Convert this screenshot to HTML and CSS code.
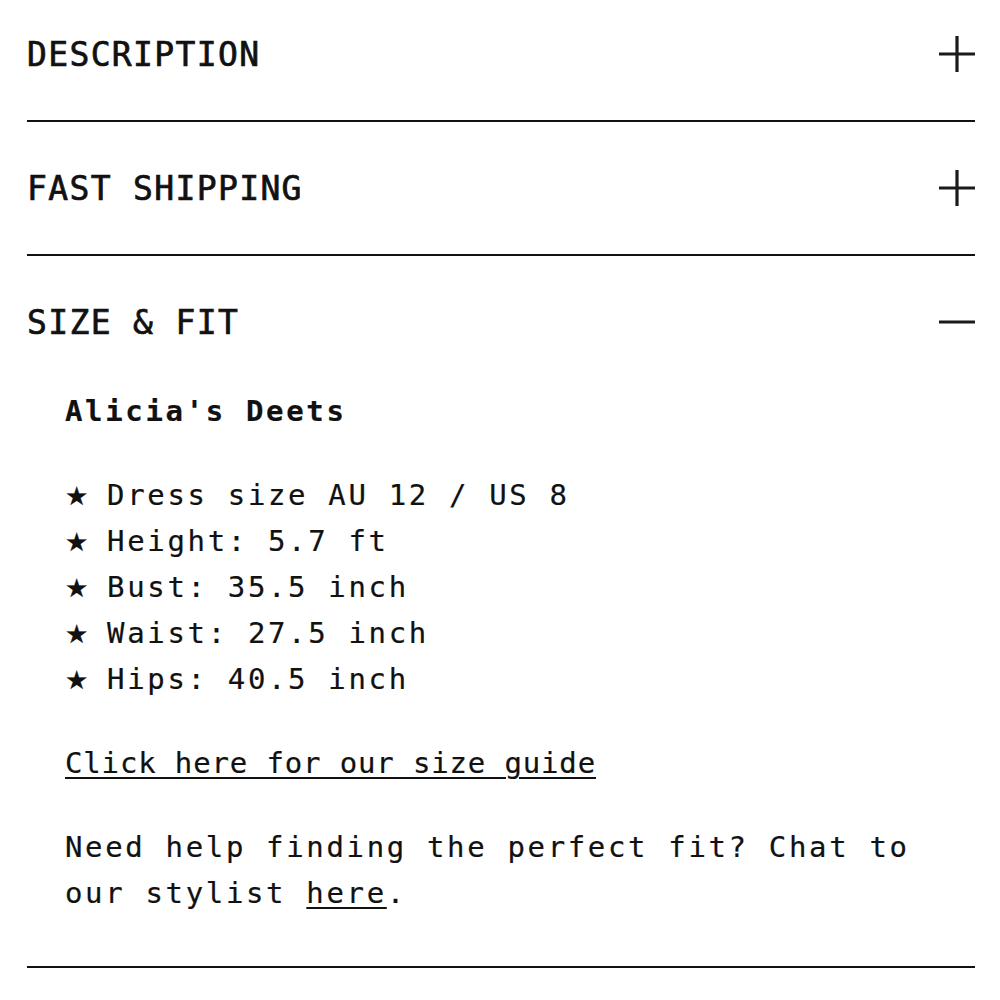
FILE: index.html
```html
<!DOCTYPE html>
<html lang="en">
<head>
<meta charset="utf-8">
<title>Product details</title>
<link rel="stylesheet" href="styles.css">
</head>
<body>
<div class="accordion">
  <section class="item">
    <div class="head">
      <h2 class="title">DESCRIPTION</h2>
      <svg class="icon" viewBox="0 0 36 36" aria-hidden="true"><path d="M0 18H36M18 0V36"/></svg>
    </div>
  </section>
  <section class="item">
    <div class="head">
      <h2 class="title">FAST SHIPPING</h2>
      <svg class="icon" viewBox="0 0 36 36" aria-hidden="true"><path d="M0 18H36M18 0V36"/></svg>
    </div>
  </section>
  <section class="item open">
    <div class="head">
      <h2 class="title">SIZE &amp; FIT</h2>
      <svg class="icon" viewBox="0 0 36 36" aria-hidden="true"><path d="M0 18H36"/></svg>
    </div>
    <div class="body">
      <p class="strong">Alicia's Deets</p>
      <p><span class="star">★</span> Dress size AU 12 / US 8<br><span class="star">★</span> Height: 5.7 ft<br><span class="star">★</span> Bust: 35.5 inch<br><span class="star">★</span> Waist: 27.5 inch<br><span class="star">★</span> Hips: 40.5 inch</p>
      <p><a class="guide" href="#">Click here for our size guide</a></p>
      <p>Need help finding the perfect fit? Chat to our stylist <a class="inline" href="#">here</a>.</p>
    </div>
  </section>
</div>
</body>
</html>
```
FILE: styles.css
```css
html, body {
  margin: 0;
  padding: 0;
  background: #ffffff;
}
body {
  font-family: "DejaVu Sans Mono", "Liberation Mono", monospace;
  color: #111111;
}
.accordion {
  margin-top: -12px;
  padding: 0 25px 0 27px;
}
.item {
  border-bottom: 2px solid #111111;
}
.head {
  height: 132px;
  display: flex;
  align-items: center;
  justify-content: space-between;
}
.title {
  margin: 0;
  font-size: 33px;
  font-weight: normal;
  letter-spacing: 1.35px;
  -webkit-text-stroke: 0.7px #111111;
}
.icon {
  width: 36px;
  height: 36px;
  stroke: #1a1a1a;
  stroke-width: 3.2;
  fill: none;
}
.body {
  padding: 0 0 50px 38px;
  font-size: 29px;
  line-height: 46px;
  letter-spacing: 2.65px;
  -webkit-text-stroke: 0.2px #111111;
}
.body p {
  margin: 0 0 38px;
}
.body p:last-child {
  margin-bottom: 0;
}
.strong {
  font-weight: bold;
}
.star {
  display: inline-block;
  width: 22px;
  line-height: 0;
  font-family: "DejaVu Sans", sans-serif;
  font-size: 26px;
  letter-spacing: 0;
}
.body a {
  color: #111111;
  text-decoration: underline;
  text-decoration-thickness: 2px;
  text-underline-offset: 4px;
}
.guide {
  letter-spacing: 0.85px;
}
```
